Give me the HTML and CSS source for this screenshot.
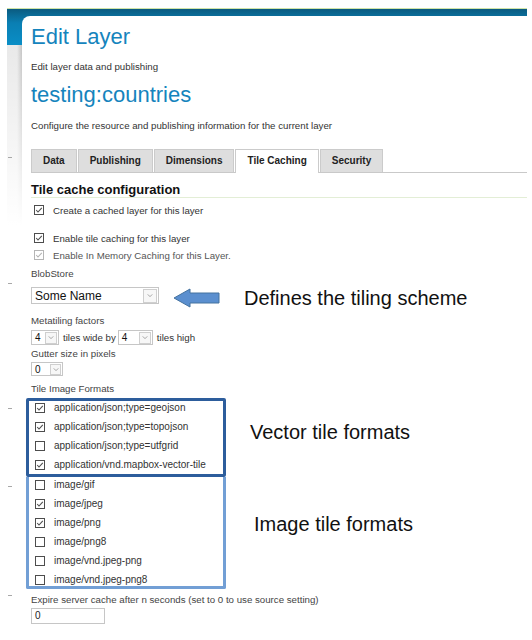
FILE: index.html
```html
<!DOCTYPE html>
<html>
<head>
<meta charset="utf-8">
<link rel="stylesheet" href="styles.css">
</head>
<body>
<div class="shell">
  <div class="panel">
    <h1 class="title">Edit Layer</h1>
    <p class="desc d1">Edit layer data and publishing</p>
    <h2 class="title t2">testing:countries</h2>
    <p class="desc d2">Configure the resource and publishing information for the current layer</p>

    <div class="tabs mark">
      <span class="tab">Data</span>
      <span class="tab">Publishing</span>
      <span class="tab">Dimensions</span>
      <span class="tab active">Tile Caching</span>
      <span class="tab">Security</span>
    </div>

    <h3 class="section">Tile cache configuration</h3>

    <div class="cb-row r1"><span class="cb"><svg viewBox="0 0 10 10"><rect x="0.5" y="0.5" width="9" height="9"/><path d="M2.2 5 L4 7 L7.8 2.8"/></svg></span>Create a cached layer for this layer</div>
    <div class="cb-row r2"><span class="cb"><svg viewBox="0 0 10 10"><rect x="0.5" y="0.5" width="9" height="9"/><path d="M2.2 5 L4 7 L7.8 2.8"/></svg></span>Enable tile caching for this layer</div>
    <div class="cb-row r3"><span class="cb dis"><svg viewBox="0 0 10 10"><rect x="0.5" y="0.5" width="9" height="9"/><path d="M2.2 5 L4 7 L7.8 2.8"/></svg></span>Enable In Memory Caching for this Layer.</div>

    <div class="label l-blob">BlobStore</div>
    <div class="blob-row mark">
      <div class="sel sel-blob"><span class="sel-text">Some Name</span><span class="sel-btn"><svg viewBox="0 0 8 6"><path d="M1 1.5 L4 4.5 L7 1.5"/></svg></span></div>
      <svg class="arrow" width="48" height="20" viewBox="0 0 48 20"><polygon points="1,10 17,1 17,5 46,5 46,15 17,15 17,19"/></svg>
      <span class="note">Defines the tiling scheme</span>
    </div>

    <div class="label l-meta">Metatiling factors</div>
    <div class="meta-row">
      <div class="sel sel-sm w27"><span class="sel-text">4</span><span class="sel-btn"><svg viewBox="0 0 8 6"><path d="M1 1.5 L4 4.5 L7 1.5"/></svg></span></div>
      <span class="inl">tiles wide by</span>
      <div class="sel sel-sm w35"><span class="sel-text">4</span><span class="sel-btn"><svg viewBox="0 0 8 6"><path d="M1 1.5 L4 4.5 L7 1.5"/></svg></span></div>
      <span class="inl">tiles high</span>
    </div>

    <div class="label l-gutter">Gutter size in pixels</div>
    <div class="sel sel-gut"><span class="sel-text">0</span><span class="sel-btn"><svg viewBox="0 0 8 6"><path d="M1 1.5 L4 4.5 L7 1.5"/></svg></span></div>

    <div class="label l-tif">Tile Image Formats</div>

    <div class="fmt-group">
      <div class="fmt-row mark vrow">
        <div class="fbox vbox">
          <div class="fl">
            <div class="cb-row f"><span class="cb"><svg viewBox="0 0 10 10"><rect x="0.5" y="0.5" width="9" height="9"/><path d="M2.2 5 L4 7 L7.8 2.8"/></svg></span>application/json;type=geojson</div>
            <div class="cb-row f"><span class="cb"><svg viewBox="0 0 10 10"><rect x="0.5" y="0.5" width="9" height="9"/><path d="M2.2 5 L4 7 L7.8 2.8"/></svg></span>application/json;type=topojson</div>
            <div class="cb-row f"><span class="cb"><svg viewBox="0 0 10 10"><rect x="0.5" y="0.5" width="9" height="9"/></svg></span>application/json;type=utfgrid</div>
            <div class="cb-row f"><span class="cb"><svg viewBox="0 0 10 10"><rect x="0.5" y="0.5" width="9" height="9"/><path d="M2.2 5 L4 7 L7.8 2.8"/></svg></span>application/vnd.mapbox-vector-tile</div>
          </div>
        </div>
        <span class="note n-vec">Vector tile formats</span>
      </div>
      <div class="fmt-row mark irow">
        <div class="fbox ibox">
          <div class="fl">
            <div class="cb-row f"><span class="cb"><svg viewBox="0 0 10 10"><rect x="0.5" y="0.5" width="9" height="9"/></svg></span>image/gif</div>
            <div class="cb-row f"><span class="cb"><svg viewBox="0 0 10 10"><rect x="0.5" y="0.5" width="9" height="9"/><path d="M2.2 5 L4 7 L7.8 2.8"/></svg></span>image/jpeg</div>
            <div class="cb-row f"><span class="cb"><svg viewBox="0 0 10 10"><rect x="0.5" y="0.5" width="9" height="9"/><path d="M2.2 5 L4 7 L7.8 2.8"/></svg></span>image/png</div>
            <div class="cb-row f"><span class="cb"><svg viewBox="0 0 10 10"><rect x="0.5" y="0.5" width="9" height="9"/></svg></span>image/png8</div>
            <div class="cb-row f"><span class="cb"><svg viewBox="0 0 10 10"><rect x="0.5" y="0.5" width="9" height="9"/></svg></span>image/vnd.jpeg-png</div>
            <div class="cb-row f"><span class="cb"><svg viewBox="0 0 10 10"><rect x="0.5" y="0.5" width="9" height="9"/></svg></span>image/vnd.jpeg-png8</div>
          </div>
        </div>
        <span class="note n-img">Image tile formats</span>
      </div>
    </div>

    <div class="label l-exp mark">Expire server cache after n seconds (set to 0 to use source setting)</div>
    <div class="input">0</div>
  </div>
</div>
</body>
</html>
```

FILE: styles.css
```css
html, body {
  margin: 0;
  padding: 0;
  background: #fff;
}
body {
  font-family: "Liberation Sans", Arial, sans-serif;
  color: #333;
}
.shell {
  margin: 8px 5px 0 7px;
  border-top: 1px solid #cfe4a8;
  padding: 7px 0 0 15px;
  height: 623px;
  box-sizing: border-box;
  background:
    linear-gradient(to bottom, rgba(255,255,255,0) 0, #fff 100%) 0 36px / 15px 180px no-repeat,
    linear-gradient(to right, #e9e9e9 0, #e9e9e9 10px, #c4c4c4 15px) 0 36px / 15px 180px no-repeat,
    linear-gradient(to bottom, #0b5b80 0, #0a7fb3 14px, #0a8ec6 36px) 0 0 / 100% 36px no-repeat,
    #fff;
}
.panel {
  background: #fff;
  border-radius: 8px 0 0 0;
  padding-left: 9px;
  height: 100%;
  box-sizing: border-box;
  overflow: visible;
  position: relative;
  padding-top: 1px;
}
.title {
  margin: 7px 0 0 0;
  font-size: 22px;
  line-height: 26px;
  font-weight: normal;
  color: #1584bd;
}
.t2 { margin-top: 8px; }
.desc {
  margin: 10px 0 0 0;
  font-size: 9.7px;
  line-height: 14px;
  color: #333;
}
.d2 { margin-top: 11px; }

.tabs {
  margin-top: 16px;
  display: flex;
  gap: 1px;
  border-bottom: 1px solid #c9c9c9;
  height: 23px;
  position: relative;
}
.tab {
  display: block;
  height: 22px;
  line-height: 22px;
  padding: 0 11px;
  background: #dedede;
  border: 1px solid #cbcbcb;
  border-bottom: none;
  font-size: 10px;
  font-weight: bold;
  color: #222;
}
.tab.active {
  background: #fff;
  height: 23px;
  margin-bottom: -1px;
}
.section {
  margin: 9px 0 0 0;
  font-size: 13px;
  line-height: 15px;
  font-weight: bold;
  color: #111;
  border-bottom: 1px solid #e3eed6;
}
.cb-row {
  display: flex;
  align-items: center;
  height: 18px;
  font-size: 9.7px;
  color: #333;
  padding-left: 3px;
}
.r1 { margin-top: 3px; }
.r2 { margin-top: 10px; }
.r3 { margin-top: -1px; color: #555; }
.cb {
  width: 10px;
  height: 10px;
  margin-right: 9px;
  display: block;
}
.cb svg {
  width: 10px;
  height: 10px;
  display: block;
  fill: #fff;
  stroke: #4d4d4d;
  stroke-width: 1;
}
.cb svg path {
  fill: none;
  stroke-width: 1.1;
}
.cb.dis svg {
  stroke: #b5b5b5;
}

.label {
  font-size: 9.7px;
  line-height: 14px;
  color: #444;
}
.l-blob { margin-top: 3px; }
.l-meta { margin-top: 10px; }
.l-gutter { margin-top: 2px; }
.l-tif { margin-top: 6px; }
.l-exp { margin-top: 4px; }

.blob-row {
  margin-top: 6px;
  display: flex;
  align-items: flex-start;
  height: 17px;
  position: relative;
}
.sel {
  display: flex;
  align-items: center;
  border: 1px solid #c6c6c6;
  background: #fff;
  box-sizing: border-box;
  color: #111;
}
.sel-text {
  flex: 1;
  padding-left: 3px;
}
.sel-btn {
  width: 12px;
  height: 12px;
  border: 1px solid #cfcfcf;
  background: #f7f7f7;
  margin-right: 1px;
  display: flex;
  align-items: center;
  justify-content: center;
  box-sizing: border-box;
}
.sel-btn svg {
  width: 6px;
  height: 5px;
  fill: none;
  stroke: #888;
  stroke-width: 1;
}
.sel-blob {
  width: 128px;
  height: 17px;
  font-size: 12px;
}
.sel-blob .sel-btn { width: 14px; height: 14px; }
.arrow {
  margin-left: 14px;
  margin-top: 1px;
  flex: none;
}
.arrow polygon {
  fill: #5b8fcf;
  stroke: #44729f;
  stroke-width: 1;
}
.note {
  font-family: "Liberation Sans", Arial, sans-serif;
  font-size: 20px;
  line-height: 20px;
  color: #111;
  white-space: nowrap;
}
.blob-row .note {
  margin-left: 23px;
  margin-top: 1px;
}

.meta-row {
  margin-top: 2px;
  display: flex;
  align-items: center;
  height: 15px;
}
.sel-sm {
  height: 15px;
  font-size: 10px;
}
.w27 { width: 28px; }
.w35 { width: 35px; }
.inl {
  font-size: 9.7px;
  color: #333;
  margin: 0 2px 0 4px;
}
.sel-gut {
  margin-top: 1px;
  width: 32px;
  height: 14px;
  font-size: 10px;
}
.sel-gut .sel-btn { width: 11px; height: 11px; }

.fmt-group {
  margin-top: 2px;
  margin-left: -5px;
}
.fmt-row {
  display: flex;
  align-items: flex-start;
  position: relative;
}
.fbox {
  width: 200px;
  box-sizing: border-box;
  border: 3px solid #2d5d9c;
  border-radius: 2px;
  padding-left: 5px;
}
.vbox {
  height: 79px;
  position: relative;
  z-index: 1;
}
.ibox {
  border-color: #729fd5;
  border-top: none;
  height: 112px;
  border-radius: 0 0 2px 2px;
}
.vbox .fl { margin-top: -3px; }
.ibox .fl { margin-top: -2px; }
.cb-row.f {
  height: 19px;
  font-size: 10px;
  padding-left: 1px;
  color: #333;
}
.n-vec {
  margin-left: 24px;
  margin-top: 24px;
}
.n-img {
  margin-left: 28px;
  margin-top: 37px;
}
.input {
  margin-top: 1px;
  width: 74px;
  height: 16px;
  box-sizing: border-box;
  border: 1px solid #c6c6c6;
  font-size: 10px;
  line-height: 14px;
  padding-left: 3px;
  color: #222;
}

.mark::before {
  content: "";
  position: absolute;
  left: -23px;
  width: 4px;
  height: 1px;
  background: #a8a8a8;
}
.tabs.mark::before { top: 8px; }
.blob-row.mark::before { top: -4px; }
.vrow.mark::before { top: 10px; left: -18px; }
.irow.mark::before { top: 9px; left: -18px; }
.l-exp.mark { position: relative; }
.l-exp.mark::before { top: 2px; }
```
